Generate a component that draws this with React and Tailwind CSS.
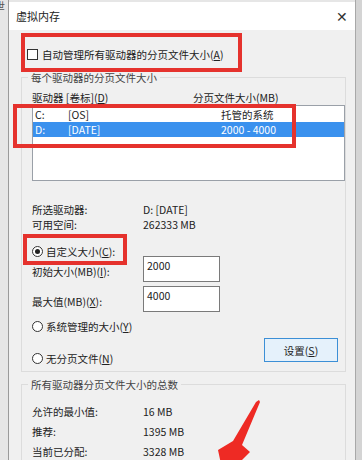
import React from 'react';

const Radio = ({ checked }) => (
  <span className="w-[11px] h-[11px] rounded-full border border-[#333] bg-white flex items-center justify-center shrink-0">
    {checked && <span className="w-[5px] h-[5px] rounded-full bg-[#222]" />}
  </span>
);

const InfoRow = ({ label, value, className = '' }) => (
  <div className={`flex h-[15px] items-center ${className}`}>
    <span className="w-[111px]">{label}</span>
    <span>{value}</span>
  </div>
);

const SizeBox = ({ label, value }) => (
  <div className="flex items-center h-[26px]">
    <span className="w-[111px] pt-[5px]">{label}</span>
    <div className="w-[77px] h-[26px] border border-[#7a7a7a] bg-white pl-[3px] pt-[1px] leading-[15px]">{value}</div>
  </div>
);

const drives = [
  { drive: 'C:', label: '[OS]', size: '托管的系统', selected: false },
  { drive: 'D:', label: '[DATE]', size: '2000 - 4000', selected: true },
];

const App = () => {
  return (
    <div className="w-[362px] h-[460px] overflow-hidden flex relative bg-[#f0f0f0] text-[10.5px] leading-[15px] text-[#222] font-['Noto_Sans_CJK_SC','Microsoft_YaHei',sans-serif]">
      {/* window behind */}
      <div className="w-[9px] shrink-0 bg-[#e6e6e6] border-r border-[#9a9a9a] overflow-hidden">
        <span className="block -ml-[5px] mt-[1px] text-[10px] leading-[10px] text-[#555]">世</span>
      </div>

      <div className="flex-1 min-w-0">
        <div className="h-[2px] bg-[#e6e6e6]" />
        <div className="h-[28px] bg-white flex items-center justify-between pl-[7px] pr-[7px]">
          <span className="text-[11px]">虚拟内存</span>
          <span className="text-[14px] leading-[14px] font-light text-[#333]">✕</span>
        </div>

        <div className="pl-[12px] pr-[9px]">
          <div className="flex items-center h-[15px] mt-[17px] pl-[6px]">
            <span className="w-[11px] h-[11px] border border-[#333] bg-white mr-[4px]" />
            <span>自动管理所有驱动器的分页文件大小(<u>A</u>)</span>
          </div>

          {/* 每个驱动器 */}
          <div className="mt-[15px] border border-[#dcdcdc] pl-[10px] pb-[5px]">
            <div className="-mt-[8px] -ml-[4px] px-[3px] w-fit bg-[#f0f0f0] text-[#444]">每个驱动器的分页文件大小</div>
            <div className="flex h-[15px] items-center mt-[5px]">
              <span className="w-[161px]">驱动器 [卷标](<u>D</u>)</span>
              <span>分页文件大小(MB)</span>
            </div>
            <div className="h-[76px] border border-[#9aa0a8] bg-white py-[1px]">
              {drives.map((d) => (
                <div
                  key={d.drive}
                  className={`grid grid-cols-[33px_153px_1fr] h-[15px] items-center pl-[2px] ${d.selected ? 'bg-[#3a91ee] text-white' : ''}`}
                >
                  <span>{d.drive}</span>
                  <span>{d.label}</span>
                  <span>{d.size}</span>
                </div>
              ))}
            </div>

            <InfoRow className="mt-[21px]" label="所选驱动器:" value="D:  [DATE]" />
            <InfoRow label="可用空间:" value="262333 MB" />

            <div className="flex items-center h-[15px] mt-[12px] gap-[3px]">
              <Radio checked />
              <span>自定义大小(<u>C</u>):</span>
            </div>
            <div className="-mt-[3px] flex flex-col gap-[4px]">
              <SizeBox label={<>初始大小(MB)(<u>I</u>):</>} value="2000" />
              <SizeBox label={<>最大值(MB)(<u>X</u>):</>} value="4000" />
            </div>
            <div className="flex items-center h-[15px] mt-[7px] gap-[3px]">
              <Radio />
              <span>系统管理的大小(<u>Y</u>)</span>
            </div>
            <div className="flex items-start justify-between pr-[7px]">
              <div className="flex items-center h-[15px] mt-[17px] gap-[3px]">
                <Radio />
                <span>无分页文件(<u>N</u>)</span>
              </div>
              <div className="mt-[4px] w-[74px] h-[24px] border border-[#3c8fd6] bg-[#e5f1fb] flex items-center justify-center">
                设置(<u>S</u>)
              </div>
            </div>
          </div>

          {/* 总数 */}
          <div className="mt-[12px] border border-[#dcdcdc] pl-[10px] h-[100px]">
            <div className="-mt-[8px] -ml-[4px] px-[3px] w-fit bg-[#f0f0f0] text-[#444]">所有驱动器分页文件大小的总数</div>
            <InfoRow className="mt-[12px]" label="允许的最小值:" value="16 MB" />
            <InfoRow className="mt-[5px]" label="推荐:" value="1395 MB" />
            <InfoRow className="mt-[5px]" label="当前已分配:" value="3328 MB" />
          </div>
        </div>
      </div>

      <div className="w-[7px] shrink-0 bg-[#d4d4d4] border-l border-[#a8a8a8]" />

      {/* annotations */}
      <div className="absolute left-[21px] top-[33px] w-[221px] h-[39px] border-4 border-[#e5322d] pointer-events-none" />
      <div className="absolute left-[13px] top-[104px] w-[283px] h-[44px] border-4 border-[#e5322d] pointer-events-none" />
      <div className="absolute left-[23px] top-[234px] w-[104px] h-[31px] border-4 border-[#e5322d] pointer-events-none" />
      <svg className="absolute left-0 top-0 pointer-events-none" width="362" height="460" viewBox="0 0 362 460">
        <polygon
          fill="#ee2a24"
          points="259,400 260,402 242,445 250,452 224,478 218,450 233,441 256,402"
        />
      </svg>
    </div>
  );
};

export default App;
